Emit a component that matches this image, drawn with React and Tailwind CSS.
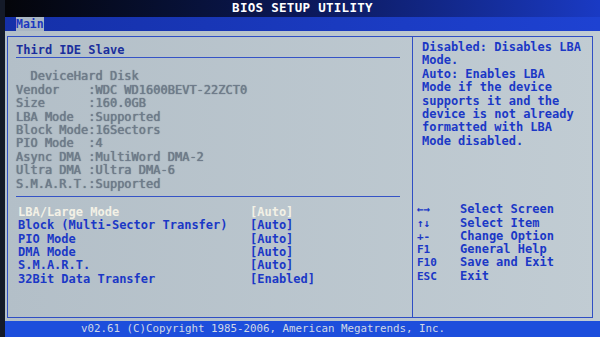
const mono = { fontFamily: '"DejaVu Sans Mono", "Liberation Mono", monospace' };

const info = [
  '  DeviceHard Disk',
  'Vendor    :WDC WD1600BEVT-22ZCT0',
  'Size      :160.0GB',
  'LBA Mode  :Supported',
  'Block Mode:16Sectors',
  'PIO Mode  :4',
  'Async DMA :MultiWord DMA-2',
  'Ultra DMA :Ultra DMA-6',
  'S.M.A.R.T.:Supported',
];

const options = [
  ['LBA/Large Mode', '[Auto]', true],
  ['Block (Multi-Sector Transfer)', '[Auto]'],
  ['PIO Mode', '[Auto]'],
  ['DMA Mode', '[Auto]'],
  ['S.M.A.R.T.', '[Auto]'],
  ['32Bit Data Transfer', '[Enabled]'],
];

const help = [
  'Disabled: Disables LBA',
  'Mode.',
  'Auto: Enables LBA',
  'Mode if the device',
  'supports it and the',
  'device is not already',
  'formatted with LBA',
  'Mode disabled.',
];

const keys = [
  ['\u2190\u2192', 'Select Screen'],
  ['\u2191\u2193', 'Select Item'],
  ['+-', 'Change Option'],
  ['F1', 'General Help'],
  ['F10', 'Save and Exit'],
  ['ESC', 'Exit'],
];

export default function App() {
  return (
    <div className="flex flex-col w-[600px] h-[337px] overflow-hidden border-l-[5px] border-[#141a28] bg-[#b9c5cd]" style={mono}>
      {/* title bar */}
      <div className="h-[17px] flex items-center justify-center bg-gradient-to-r from-[#04050a] via-[#0b1858] to-[#1a3ac4] text-white font-bold text-[12.5px] tracking-[0.3px]">
        BIOS SETUP UTILITY
      </div>

      {/* menu bar */}
      <div className="h-[14px] flex bg-gradient-to-r from-[#1530a8] to-[#1e42d2]">
        <div className="ml-[11px] w-[28px] h-full bg-[#a9b6c4] text-[#1c38c0] text-[11.5px] leading-[14px] font-bold">Main</div>
      </div>

      {/* body */}
      <div className="flex-1 pt-[5px] pl-[2px] pr-[7px] pb-[3px] bg-gradient-to-r from-[#b3bfc8] to-[#c1ccd3]">
        <div className="h-full flex border border-[#2f4ec4]">
          {/* left panel */}
          <div className="w-[405px] border-r border-[#2f4ec4] pt-[7px] text-[12px] leading-[13.4px] font-bold">
            <div className="ml-[8px] text-[#1b2f9c]">Third IDE Slave</div>
            <div className="mt-[0px] ml-[8px] mr-[12px] h-px bg-[#3553c6]" />
            <div className="mt-[12px] ml-[8px] text-[#6f7c8b] whitespace-pre font-normal [text-shadow:0_0_1px_#56606e]">
              {info.map((l) => (
                <div key={l}>{l}</div>
              ))}
            </div>
            <div className="mt-[5px] ml-[8px] mr-[12px] h-px bg-[#3553c6]" />
            <div className="mt-[9px] ml-[10px] leading-[13.3px]">
              {options.map(([label, value, active]) => (
                <div key={label} className={`flex ${active ? 'text-[#f3f1e6]' : 'text-[#1b38c6]'}`}>
                  <span className="w-[232px]">{label}</span>
                  <span>{value}</span>
                </div>
              ))}
            </div>
          </div>

          {/* right panel */}
          <div className="flex-1 flex flex-col pt-[4px] text-[12px] leading-[13.4px] font-bold text-[#1b38c6]">
            <div className="ml-[9px]">
              {help.map((l) => (
                <div key={l}>{l}</div>
              ))}
            </div>
            <div className="mt-[55px] ml-[4px] leading-[13.3px]">
              {keys.map(([k, d]) => (
                <div key={d} className="flex">
                  <span className="w-[43px] text-[11px]">{k}</span>
                  <span>{d}</span>
                </div>
              ))}
            </div>
          </div>
        </div>
      </div>

      {/* footer */}
      <div className="h-[16px] flex items-center pl-[76px] bg-[#1d4edc] text-[#cfd7e6] text-[10.8px] whitespace-pre">
        v02.61 (C)Copyright 1985-2006, American Megatrends, Inc.
      </div>
    </div>
  );
}
